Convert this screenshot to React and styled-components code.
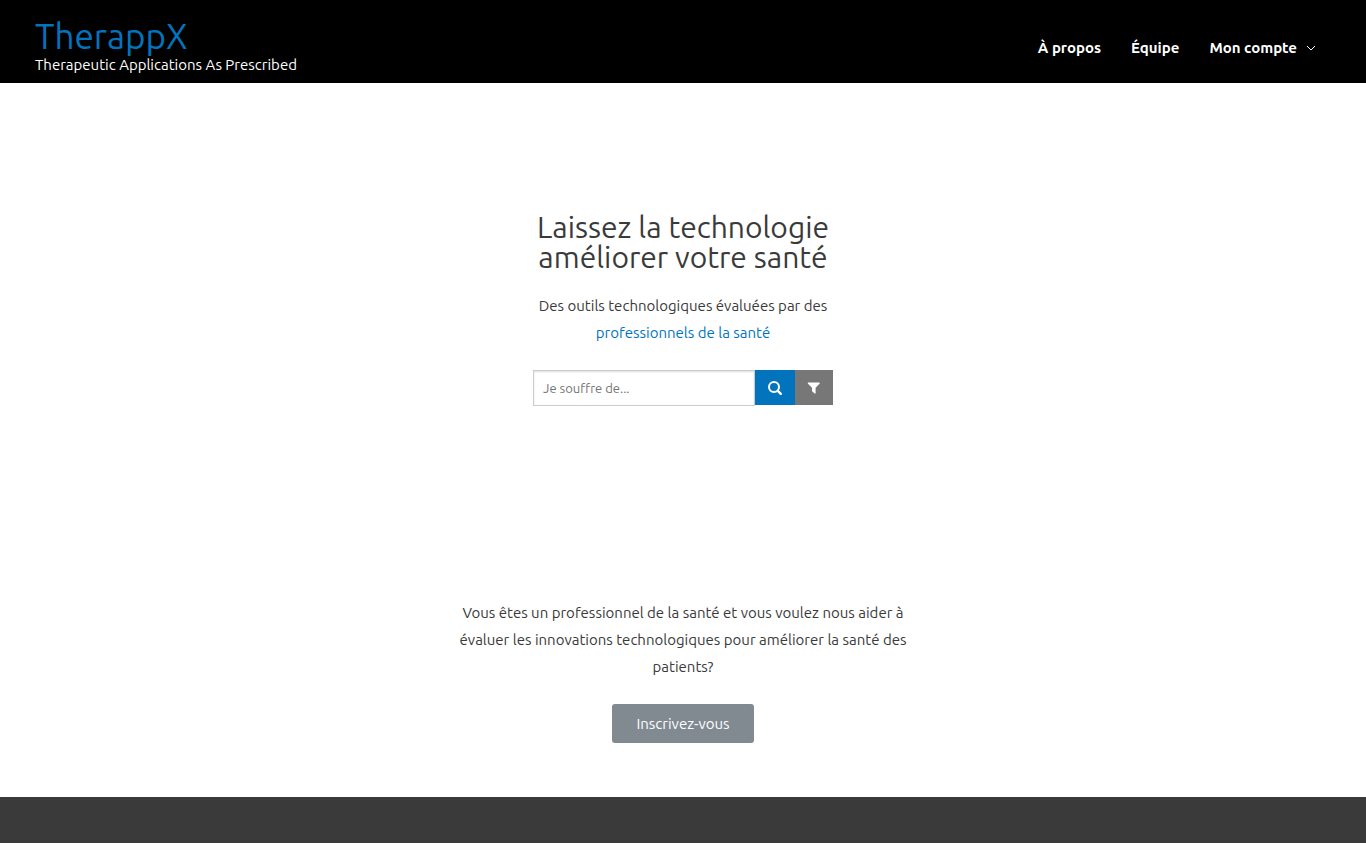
import React from "react";
import styled, { createGlobalStyle } from "styled-components";

const GlobalStyle = createGlobalStyle`
  *, *::before, *::after { box-sizing: border-box; }
  body {
    margin: 0;
    background: #fff;
    color: #3a3a3a;
    font-family: Ubuntu, "Noto Sans", sans-serif;
    font-size: 15px;
    font-weight: 450;
    line-height: 27px;
  }
  a { color: #0274be; text-decoration: none; }
  h1, p { margin: 0; font-weight: inherit; }
`;

const Page = styled.div`
  display: flex;
  flex-direction: column;
  min-height: 100vh;
`;

const Header = styled.header`
  display: flex;
  flex-wrap: wrap;
  justify-content: space-between;
  align-items: center;
  padding: 17px 35px 8px;
  background: #000;
`;

const SiteTitle = styled.a`
  display: block;
  font-size: 35px;
  line-height: 38px;
`;

const Tagline = styled.p`
  font-size: 15px;
  line-height: 20px;
  color: #fff;
`;

const Nav = styled.nav`
  display: flex;
  gap: 30px;
  padding: 2px 15px 0;
`;

const NavLink = styled.a`
  display: flex;
  align-items: center;
  gap: 9px;
  color: #fff;
  font-size: 15px;
  font-weight: 750;
`;

const Main = styled.main`
  flex: 1;
  display: flex;
  flex-direction: column;
  align-items: center;
  padding: 129px 20px 54px;
  text-align: center;
`;

const Hero = styled.section`
  width: 300px;
  display: flex;
  flex-direction: column;
  align-items: center;
  gap: 20px;
  white-space: nowrap;
`;

const Heading = styled.h1`
  font-size: 30px;
  line-height: 30px;
`;

const Text = styled.p`
  font-size: 15px;
`;

const SearchForm = styled.form`
  display: flex;
  align-items: flex-start;
  width: 100%;
  padding-top: 4px;
`;

const SearchInput = styled.input`
  flex: 1;
  min-width: 0;
  height: 36px;
  padding: 0 9px;
  border: 1px solid #ccc;
  border-radius: 0;
  background: #fff;
  box-shadow: inset 0 1px 2px #ddd;
  color: #666;
  font-family: inherit;
  font-size: 13px;
  font-weight: inherit;
  &::placeholder { color: #757575; opacity: 1; }
`;

const IconButton = styled.button`
  display: flex;
  align-items: center;
  justify-content: center;
  width: ${(p) => (p.$primary ? 40 : 38)}px;
  height: 35px;
  padding: 0;
  border: 0;
  color: #fff;
  background: ${(p) => (p.$primary ? "#0274be" : "#777")};
  cursor: pointer;
`;

const Invite = styled.section`
  display: flex;
  flex-direction: column;
  align-items: center;
  gap: 24px;
  max-width: 460px;
  margin-top: 193px;
`;

const SignUp = styled.button`
  padding: 0 24px;
  border: 0;
  border-radius: 3px;
  background: #818a91;
  color: #fff;
  font-family: inherit;
  font-size: 15px;
  font-weight: inherit;
  line-height: 39px;
  cursor: pointer;
`;

const Footer = styled.footer`
  height: 46px;
  background: #3a3a3a;
`;

const SearchIcon = () => (
  <svg width="16" height="16" viewBox="0 0 16 16" fill="none" stroke="currentColor" aria-hidden="true">
    <circle cx="7" cy="7" r="5" strokeWidth="2" />
    <path d="M10.8 10.8l3 3" strokeWidth="2.4" strokeLinecap="round" />
  </svg>
);

const FilterIcon = () => (
  <svg width="16" height="16" viewBox="0 0 16 16" fill="currentColor" aria-hidden="true">
    <path d="M2.6 2.5h10.3c.9 0 1.1.7.6 1.2L9.6 7.8v5.3c0 .6-.5.8-.9.4L6.3 11.4c-.2-.2-.3-.3-.3-.6v-3L2 3.7c-.5-.5-.2-1.2.6-1.2z" />
  </svg>
);

export default function App() {
  return (
    <Page>
      <GlobalStyle />
      <Header>
        <div>
          <SiteTitle href="#">TherappX</SiteTitle>
          <Tagline>Therapeutic Applications As Prescribed</Tagline>
        </div>
        <Nav>
          <NavLink href="#">À propos</NavLink>
          <NavLink href="#">Équipe</NavLink>
          <NavLink href="#">
            Mon compte
            <svg width="10" height="10" viewBox="0 0 10 10" fill="none" stroke="currentColor" aria-hidden="true">
              <path d="M1 4l4 4 4-4" />
            </svg>
          </NavLink>
        </Nav>
      </Header>
      <Main>
        <Hero>
          <Heading>
            Laissez la technologie
            <br />
            améliorer votre santé
          </Heading>
          <Text>
            Des outils technologiques évaluées par des
            <br />
            <a href="#">professionnels de la santé</a>
          </Text>
          <SearchForm onSubmit={(e) => e.preventDefault()}>
            <SearchInput type="text" placeholder="Je souffre de..." aria-label="Je souffre de..." />
            <IconButton type="submit" $primary aria-label="Rechercher">
              <SearchIcon />
            </IconButton>
            <IconButton type="button" aria-label="Filtrer">
              <FilterIcon />
            </IconButton>
          </SearchForm>
        </Hero>
        <Invite>
          <Text>
            Vous êtes un professionnel de la santé et vous voulez nous aider à
            <br />
            évaluer les innovations technologiques pour améliorer la santé des
            <br />
            patients?
          </Text>
          <SignUp type="button">Inscrivez-vous</SignUp>
        </Invite>
      </Main>
      <Footer />
    </Page>
  );
}
